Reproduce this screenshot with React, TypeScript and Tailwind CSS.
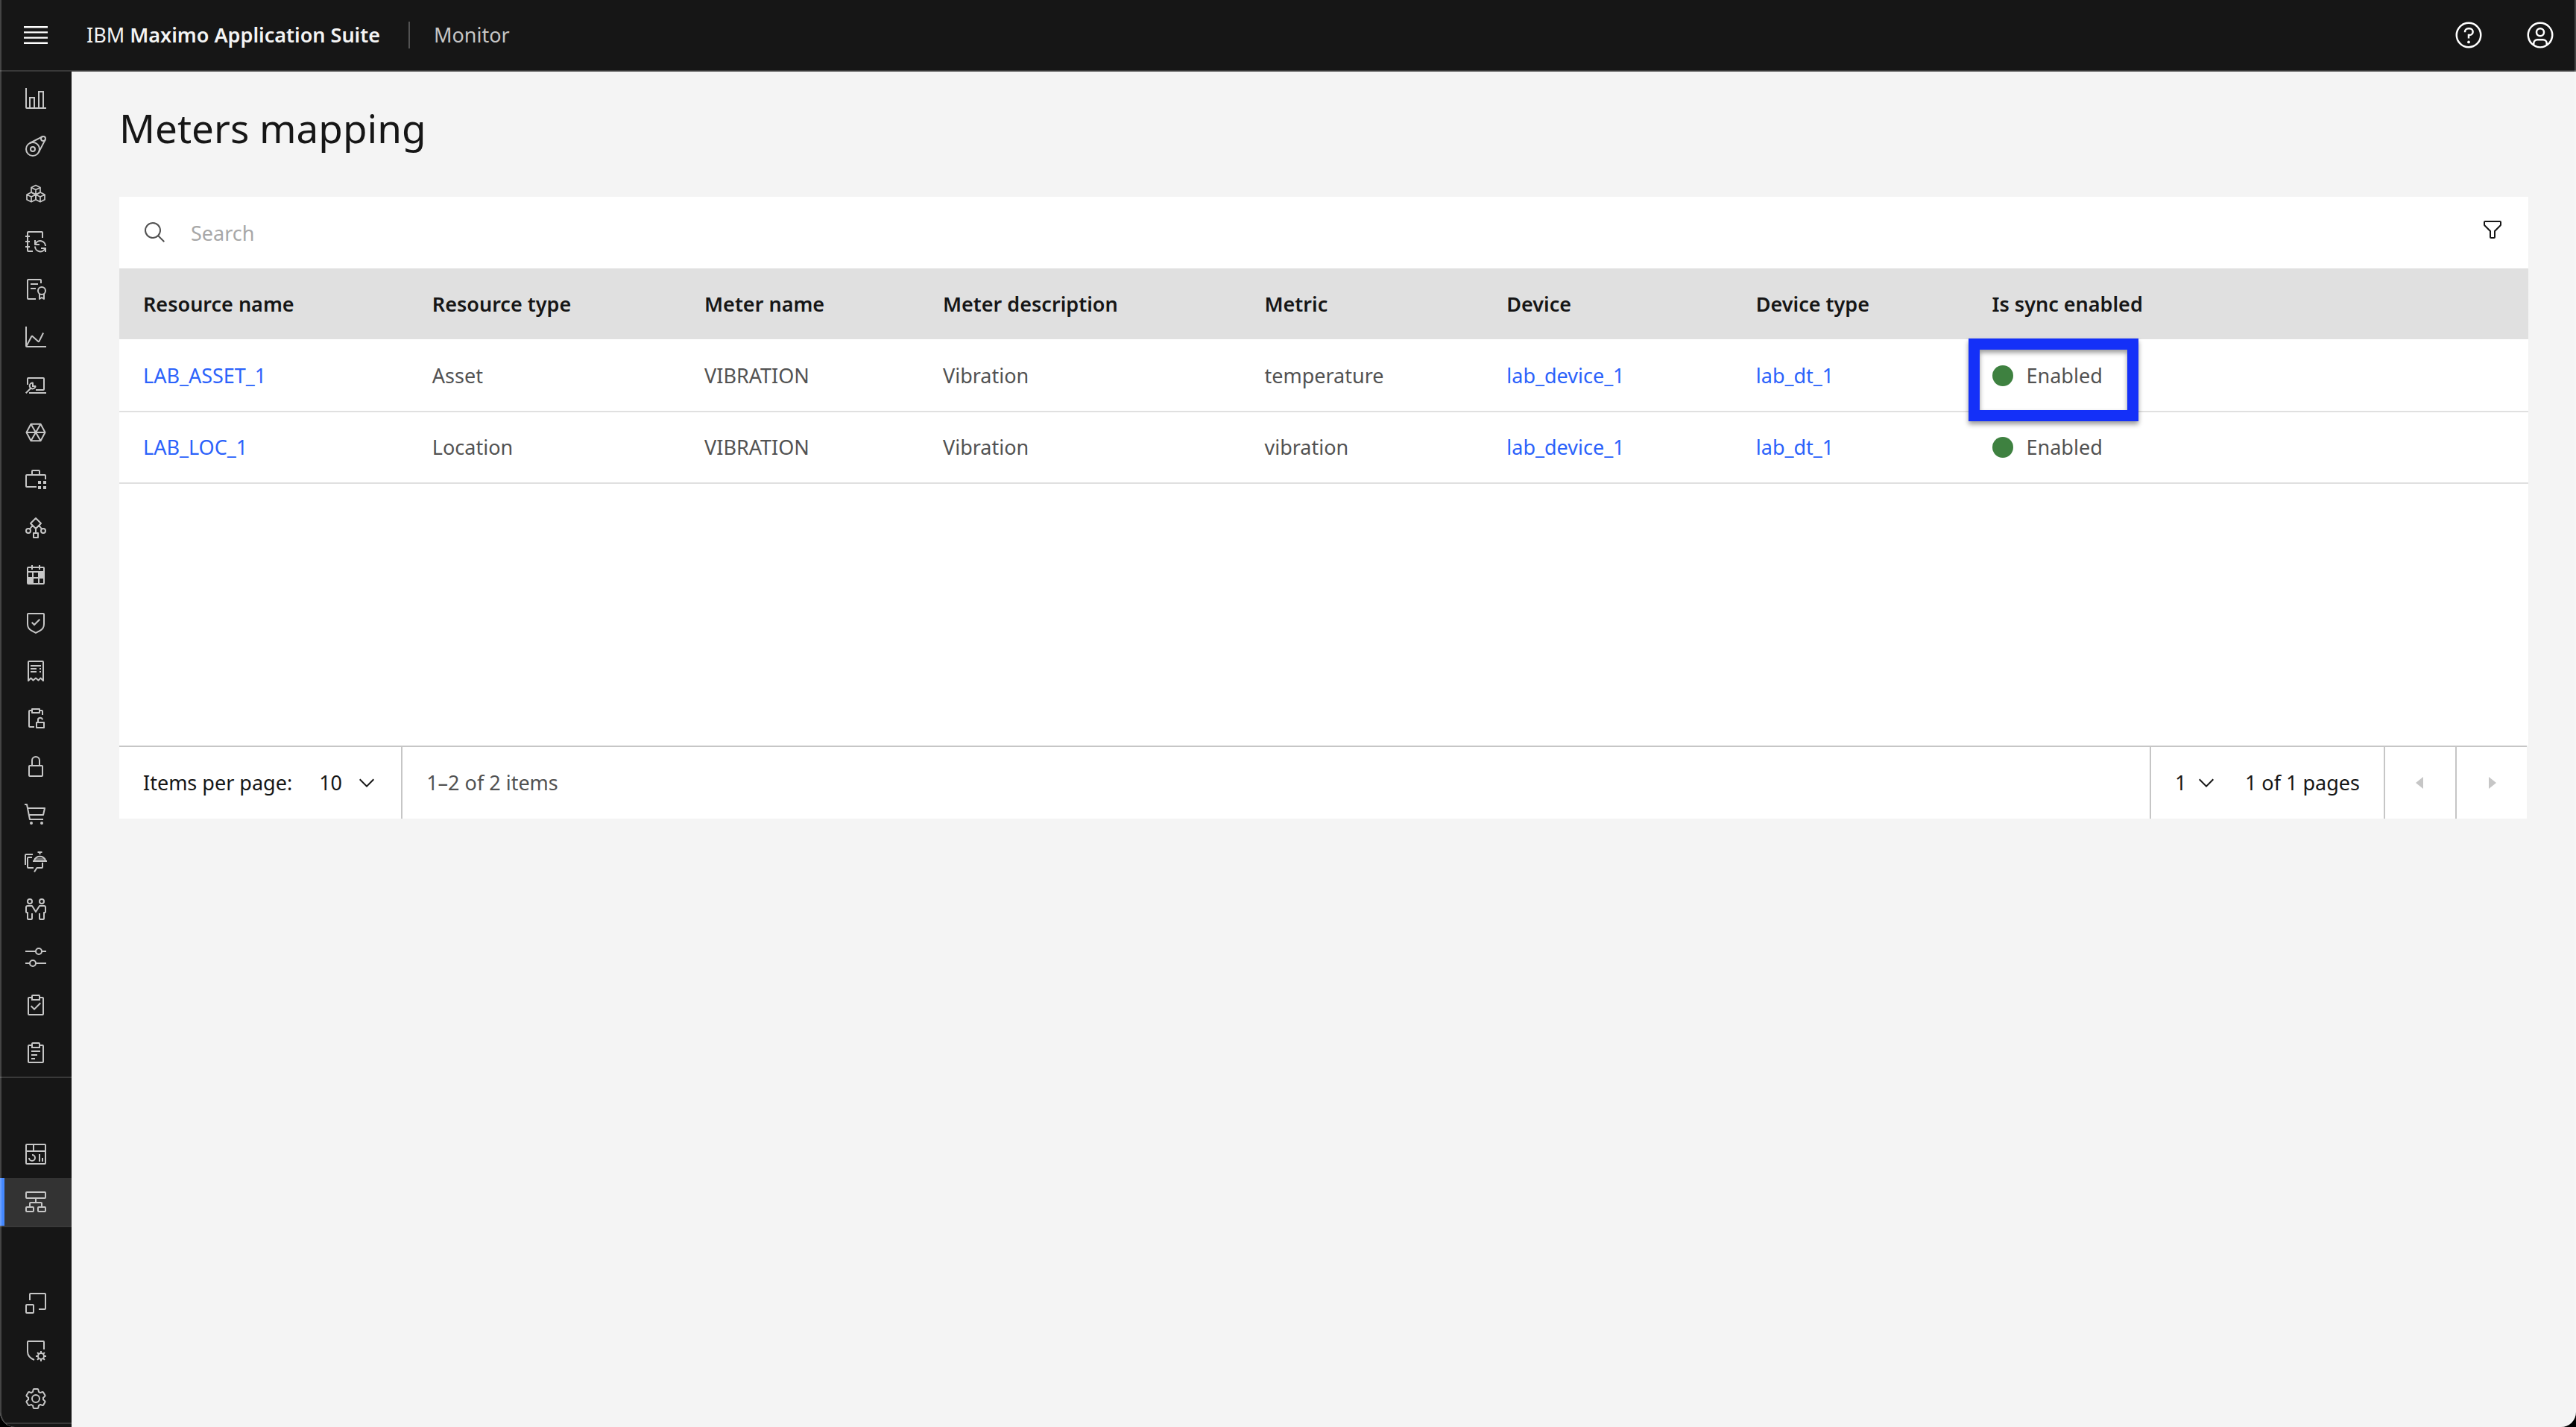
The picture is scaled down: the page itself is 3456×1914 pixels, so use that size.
import type { ReactNode } from 'react'

// 32x32 icon, filled and stroked shapes can be mixed
function Icon({ children, className = 'size-8' }: { children: ReactNode, className?: string }) {
    return <svg viewBox="0 0 32 32" fill="currentColor" className={`${className} shrink-0`} aria-hidden="true">{children}</svg>
}

function Lines({ children, width = 2 }: { children: ReactNode, width?: number }) {
    return <g fill="none" stroke="currentColor" strokeWidth={width} strokeLinejoin="round">{children}</g>
}

const clipboard = 'M25,5H22V4a2,2,0,0,0-2-2H12a2,2,0,0,0-2,2V5H7A2,2,0,0,0,5,7V28a2,2,0,0,0,2,2H25a2,2,0,0,0,2-2V7A2,2,0,0,0,25,5ZM12,4h8V8H12ZM25,28H7V7h3v3H22V7h3Z'

const mainNav = [
    { label: 'Dashboards', icon: <path d="M27,28V6H19V28H15V14H7V28H4V2H2V28a2,2,0,0,0,2,2H30V28ZM13,28H9V16h4Zm12,0H21V8h4Z" /> },
    { label: 'Assets', icon: <Lines><circle cx="12" cy="20" r="9" /><circle cx="12" cy="20" r="3" /><circle cx="26" cy="6" r="3" /><path d="M7.9 12 24.6 3.3M20 24.1 28.7 7.4" /></Lines> },
    { label: 'Inventory', icon: <Lines width={1.7}>
        <path d="M16 4.5l6 3v6.6l-6 3-6-3V7.5zM10 7.5l6 3 6-3M16 10.5v6.6" />
        <path d="M10 14.1l6 3v6.6l-6 3-6-3v-6.6zM4 17.1l6 3 6-3M10 20.1v6.6" />
        <path d="M22 14.1l6 3v6.6l-6 3-6-3v-6.6zM16 17.1l6 3 6-3M22 20.1v6.6" />
    </Lines> },
    { label: 'Planning', icon: <Lines><path d="M25 11V4a1 1 0 0 0-1-1H6a1 1 0 0 0-1 1v24a1 1 0 0 0 1 1h6M2 9h6M2 16h6M2 23h6" /><path d="M15 14v6h6M15.5 19.5A7 7 0 0 1 29 22M29 30v-5h-6M28.5 25A7 7 0 0 1 15 22.5" /></Lines> },
    { label: 'Contracts', icon: <Lines><path d="M23 8V4a1 1 0 0 0-1-1H6a1 1 0 0 0-1 1v24a1 1 0 0 0 1 1h10M9 9h10M9 15h7" /><circle cx="24" cy="18" r="5" /><path d="M21 22v7l3-2 3 2v-7" /></Lines> },
    { label: 'Financial', icon: <path d="M4.67,28l6.39-12,7.3,6.62a2,2,0,0,0,1.7.47,2,2,0,0,0,1.42-1.07L27,10.9,25.18,10,19.7,21,12.4,14.38a2,2,0,0,0-1.7-.47,2,2,0,0,0-1.44,1.09L4,25V2H2V28a2,2,0,0,0,2,2H30V28Z" /> },
    { label: 'IT assets', icon: <Lines><path d="M5 16V8a1 1 0 0 1 1-1h20a1 1 0 0 1 1 1v14a1 1 0 0 1-1 1H16M7 27h23" /><path d="M2.7 27.3 9 21M12.5 13.6a4 4 0 1 0 3.2 4.2M12 13.5v4.5h4" strokeLinejoin="miter" /></Lines> },
    { label: 'Integration', icon: <Lines><path d="M3.5 16 9.5 4.8h13L28.5 16l-6 11.2h-13zM3.5 16h25M9.5 4.8l13 22.4M22.5 4.8l-13 22.4" /></Lines> },
    { label: 'Preventive maintenance', icon: <><Lines><path d="M29 15v-5a1 1 0 0 0-1-1H4a1 1 0 0 0-1 1v14a1 1 0 0 0 1 1h13M11 9V4a1 1 0 0 1 1-1h8a1 1 0 0 1 1 1v5" /></Lines><path d="M19 17h4v4h-4zM26 17h4v4h-4zM19 24h4v4h-4zM26 24h4v4h-4z" /></> },
    { label: 'Workflows', icon: <Lines><path d="M16 3l7 7-7 7-7-7zM16 17v5M11.5 13 8 17.5M20.5 13l3.5 4.5M13 23h6v6h-6z" /><circle cx="6" cy="20" r="3" /><circle cx="26" cy="20" r="3" /></Lines> },
    { label: 'Releases', icon: <path fillRule="evenodd" d="M6 4h4V2h2v2h8V2h2v2h4a2 2 0 0 1 2 2v20a2 2 0 0 1-2 2H6a2 2 0 0 1-2-2V6a2 2 0 0 1 2-2zM6 6v4h20V6h-4v2h-2V6h-8v2h-2V6zM6 12h5v6H6zM13 12h6v6h-6zM13 20h6v6h-6zM21 20h5v6h-5z" /> },
    { label: 'Security', icon: <><path d="M14,16.59,11.41,14,10,15.41l4,4,8-8L20.59,10Z" /><path d="M16,30,9.824,26.707A10.98,10.98,0,0,1,4,17V4A2,2,0,0,1,6,2H26a2,2,0,0,1,2,2V17a10.98,10.98,0,0,1-5.824,9.707ZM6,4V17a8.985,8.985,0,0,0,4.766,7.942L16,27.733l5.234-2.791A8.986,8.986,0,0,0,26,17V4Z" /></> },
    { label: 'Purchasing', icon: <Lines><path d="M6 29V4a1 1 0 0 1 1-1h18a1 1 0 0 1 1 1v25l-3.5-3.5L19.5 28.5 16 25.5l-3.5 3L9.5 25.5zM9 9h14M9 13h8M21 13h2M9 17h8M21 17h2" /></Lines> },
    { label: 'Access', icon: <Lines><path d="M14 27H8a1 1 0 0 1-1-1V6a1 1 0 0 1 1-1h3M21 5h3a1 1 0 0 1 1 1v5M11 3h10v5H11z" /><path d="M17 21h10v7H17zM19 21v-3a3 3 0 0 1 6-.6" /></Lines> },
    { label: 'Administration', icon: <path d="M24,14H22V8A6,6,0,0,0,10,8v6H8a2,2,0,0,0-2,2V28a2,2,0,0,0,2,2H24a2,2,0,0,0,2-2V16A2,2,0,0,0,24,14ZM12,8a4,4,0,0,1,8,0v6H12ZM24,28H8V16H24Z" /> },
    { label: 'Self service', icon: <><circle cx="10" cy="28" r="2" /><circle cx="24" cy="28" r="2" /><path d="M28,7H5.82L5,2.8A1,1,0,0,0,4,2H1V4H3.18L7,23.2A1,1,0,0,0,8,24H26V22H8.82L8,18H26a1,1,0,0,0,1-.78l2-9A1,1,0,0,0,28,7ZM25.2,16H7.62l-1.4-7H26.75Z" /></> },
    { label: 'Service desk', icon: <><Lines><path d="M2 20V7a1 1 0 0 1 1-1h9M11 10H6a1 1 0 0 0-1 1v12a1 1 0 0 0 1 1h7M14 29.5l3.5-5.5H24a1 1 0 0 0 1-1v-6M12 15h19M14 14a8 8 0 0 1 15 0M18.5 3h6M21.5 3v3" /></Lines><path d="M14 11h15l1 4H13z" opacity=".5" /></> },
    { label: 'Resources', icon: <Lines><circle cx="8" cy="5" r="3" /><circle cx="24" cy="5" r="3" /><path d="M11 21v7a1 1 0 0 1-1 1H6a1 1 0 0 1-1-1v-8H4a1 1 0 0 1-1-1v-6a2 2 0 0 1 2-2h6l5 8 5-8h6a2 2 0 0 1 2 2v6a1 1 0 0 1-1 1h-1v8a1 1 0 0 1-1 1h-4a1 1 0 0 1-1-1v-7" /></Lines> },
    { label: 'System configuration', icon: <Lines><circle cx="20" cy="8" r="4" /><circle cx="12" cy="24" r="4" /><path d="M2 8h14M24 8h6M2 24h6M16 24h14" /></Lines> },
    { label: 'Task management', icon: <><path d="M14,20.18 10.41,16.59 9,18 14,23 23,14 21.59,12.58Z" /><path d={clipboard} /></> },
    { label: 'Work orders', icon: <><path d="M10 13h12v2H10zM10 18h8v2h-8zM10 23h5v2h-5z" /><path d={clipboard} /></> },
]

const monitorNav = [
    { label: 'Monitor dashboard', icon: <><path d="M24 21h2v5h-2zM20 16h2v10h-2zM11,26a5,5,0,0,1-5-5H8a3,3,0,1,0,3-3V16a5,5,0,0,1,0,10Z" /><path d="M28,2H4A2,2,0,0,0,2,4V28a2,2,0,0,0,2,2H28a2,2,0,0,0,2-2V4A2,2,0,0,0,28,2Zm0,9H14V4H28ZM12,4v7H4V4ZM4,28V13H28V28Z" /></> },
    { label: 'Setup', active: true, icon: <Lines><rect x="3" y="3" width="26" height="8" rx="1" /><rect x="3" y="23" width="10" height="6" rx="1" /><rect x="19" y="23" width="10" height="6" rx="1" /><path d="M16 11v6M8 23v-5a1 1 0 0 1 1-1h14a1 1 0 0 1 1 1v5" /></Lines> },
]

const bottomNav = [
    { label: 'Applications', icon: <Lines><rect x="3" y="18" width="10" height="11" rx="1" /><path d="M8 12V4a1 1 0 0 1 1-1h19a1 1 0 0 1 1 1v19a1 1 0 0 1-1 1h-8" /></Lines> },
    { label: 'Suite administration', icon: <Lines><path d="M27 14V4a1 1 0 0 0-1-1H6a1 1 0 0 0-1 1v13c0 5 4 9 9 11" /><circle cx="23" cy="23" r="4" /><path d="M23 16v3M23 27v3M16 23h3M27 23h3M18.1 18.1l2.1 2.1M25.8 25.8l2.1 2.1M27.9 18.1l-2.1 2.1M20.2 25.8l-2.1 2.1" /></Lines> },
    { label: 'Settings', icon: <><path d="M27,16.76c0-.25,0-.5,0-.76s0-.51,0-.77l1.92-1.68A2,2,0,0,0,29.3,11L26.94,7a2,2,0,0,0-1.73-1,2,2,0,0,0-.64.1l-2.43.82a11.35,11.35,0,0,0-1.31-.75l-.51-2.52a2,2,0,0,0-2-1.61H13.64a2,2,0,0,0-2,1.61l-.51,2.52a11.48,11.48,0,0,0-1.32.75L7.43,6.06A2,2,0,0,0,6.79,6,2,2,0,0,0,5.06,7L2.7,11a2,2,0,0,0,.41,2.51L5,15.24c0,.25,0,.5,0,.76s0,.51,0,.77L3.11,18.45A2,2,0,0,0,2.7,21L5.06,25a2,2,0,0,0,1.73,1,2,2,0,0,0,.64-.1l2.43-.82a11.35,11.35,0,0,0,1.31.75l.51,2.52a2,2,0,0,0,2,1.61h4.72a2,2,0,0,0,2-1.61l.51-2.52a11.48,11.48,0,0,0,1.32-.75l2.42.82a2,2,0,0,0,.64.1,2,2,0,0,0,1.73-1L29.3,21a2,2,0,0,0-.41-2.51ZM25.21,24l-3.43-1.16a8.86,8.86,0,0,1-2.71,1.57L18.36,28H13.64l-.71-3.55a9.36,9.36,0,0,1-2.7-1.57L6.79,24,4.43,20l2.72-2.4a8.9,8.9,0,0,1,0-3.13L4.43,12,6.79,8l3.43,1.16a8.86,8.86,0,0,1,2.71-1.57L13.64,4h4.72l.71,3.55a9.36,9.36,0,0,1,2.7,1.57L25.21,8,27.57,12l-2.72,2.4a8.9,8.9,0,0,1,0,3.13L27.57,20Z" /><Lines><circle cx="16" cy="16" r="5" /></Lines></> },
]

const columns = [
    { name: 'Resource name', width: 'w-[12%]' },
    { name: 'Resource type', width: 'w-[11.3%]' },
    { name: 'Meter name', width: 'w-[9.9%]' },
    { name: 'Meter description', width: 'w-[13.35%]' },
    { name: 'Metric', width: 'w-[10.05%]' },
    { name: 'Device', width: 'w-[10.35%]' },
    { name: 'Device type', width: 'w-[9.8%]' },
    { name: 'Is sync enabled', width: '' },
]

const rows = [
    { resource: 'LAB_ASSET_1', type: 'Asset', meter: 'VIBRATION', description: 'Vibration', metric: 'temperature', device: 'lab_device_1', deviceType: 'lab_dt_1', highlight: true },
    { resource: 'LAB_LOC_1', type: 'Location', meter: 'VIBRATION', description: 'Vibration', metric: 'vibration', device: 'lab_device_1', deviceType: 'lab_dt_1', highlight: false },
]

type NavItem = { label: string, icon: ReactNode, active?: boolean }

function NavList({ items }: { items: NavItem[] }) {
    return <ul>
        {items.map(item => <li key={item.label}>
            <a
                href="#"
                aria-label={item.label}
                className={item.active
                    ? 'flex h-16 items-center border-l-6 border-[#4589ff] bg-[#333333] pl-[26px]'
                    : 'flex h-16 items-center pl-8'}
            >
                <Icon>{item.icon}</Icon>
            </a>
        </li>)}
    </ul>
}

function Header() {
    return <header className="flex h-24 items-center border-b-2 border-[#393939] bg-[#161616] text-[#f4f4f4]">
        <button aria-label="Open menu" className="flex h-full w-24 items-center justify-center">
            <svg viewBox="0 0 20 20" fill="#fff" className="size-10" aria-hidden="true">
                <path d="M2 14.8h16V16H2zM2 11.2h16v1.2H2zM2 7.6h16v1.2H2zM2 4h16v1.2H2z" />
            </svg>
        </button>
        <a href="#" className="pl-5">IBM <span className="font-semibold">Maximo Application Suite</span></a>
        <span className="ml-[38px] h-9 w-0.5 bg-[#525252]" />
        <span className="ml-8 text-[#c6c6c6]">Monitor</span>
        <div className="ml-auto flex h-full text-white">
            <button aria-label="Help" className="flex w-24 items-center justify-center">
                <Icon className="size-10">
                    <path d="M16,2A14,14,0,1,0,30,16,14,14,0,0,0,16,2Zm0,26A12,12,0,1,1,28,16,12,12,0,0,1,16,28Z" />
                    <circle cx="16" cy="23.5" r="1.5" />
                    <path d="M17,8H15.5A4.49,4.49,0,0,0,11,12.5V13h2v-.5A2.5,2.5,0,0,1,15.5,10H17a2.5,2.5,0,0,1,0,5H15v4.5h2V17a4.5,4.5,0,0,0,0-9Z" />
                </Icon>
            </button>
            <button aria-label="User profile" className="flex w-24 items-center justify-center">
                <Icon className="size-10">
                    <path d="M16,8a5,5,0,1,0,5,5A5,5,0,0,0,16,8Zm0,8a3,3,0,1,1,3-3A3,3,0,0,1,16,16Z" />
                    <path d="M16,2A14,14,0,1,0,30,16,14.016,14.016,0,0,0,16,2ZM10,26.377V25a3,3,0,0,1,3-3h6a3,3,0,0,1,3,3v1.377a11.899,11.899,0,0,1-12,0Zm13.993-1.451A5,5,0,0,0,19,20H13a5,5,0,0,0-4.993,4.926,12,12,0,1,1,15.985,0Z" />
                </Icon>
            </button>
        </div>
    </header>
}

function Sidebar() {
    return <aside className="flex w-24 shrink-0 flex-col bg-[#161616] text-[#c6c6c6]">
        <nav className="flex flex-1 flex-col border-b-2 border-[#393939]">
            <div className="border-b-2 border-[#393939] pt-1">
                <NavList items={mainNav} />
            </div>
            <div className="border-b-2 border-[#393939] pt-[70px]">
                <NavList items={monitorNav} />
            </div>
            <div className="mt-auto">
                <NavList items={bottomNav} />
            </div>
        </nav>
        <div className="h-1" />
    </aside>
}

function Chevron() {
    return <Icon className="pointer-events-none absolute right-0 size-8">
        <path d="M16 22 6 12l1.4-1.4 8.6 8.6 8.6-8.6L26 12z" />
    </Icon>
}

function Pagination() {
    return <div className="mr-0.5 flex h-[98px] items-stretch border-t-2 border-[#c6c6c6] bg-white">
        <div className="flex items-center pl-8 pr-[30px]">
            <label htmlFor="page-size">Items per page:</label>
            <div className="relative ml-9 flex items-center">
                <select id="page-size" className="w-20 appearance-none bg-transparent" defaultValue="10">
                    <option>10</option>
                    <option>20</option>
                    <option>30</option>
                </select>
                <Chevron />
            </div>
        </div>
        <div className="flex items-center border-l-2 border-[#c6c6c6] pl-8 text-[#525252]">1–2 of 2 items</div>
        <div className="ml-auto flex items-center border-l-2 border-[#c6c6c6] pl-8 pr-8">
            <div className="relative flex items-center">
                <select aria-label="Page number" className="w-[58px] appearance-none bg-transparent" defaultValue="1">
                    <option>1</option>
                </select>
                <Chevron />
            </div>
            <span className="ml-9">1 of 1 pages</span>
        </div>
        <button disabled aria-label="Previous page" className="flex w-24 items-center justify-center border-l-2 border-[#c6c6c6] text-[#c6c6c6]">
            <Icon><path d="M20 24 10 16 20 8z" /></Icon>
        </button>
        <button disabled aria-label="Next page" className="flex w-24 items-center justify-center border-l-2 border-[#c6c6c6] text-[#c6c6c6]">
            <Icon><path d="M12 8l10 8-10 8z" /></Icon>
        </button>
    </div>
}

function MetersTable() {
    return <section className="mt-[60px]">
        <div className="min-h-[736px] bg-white">
            <div className="flex h-24 items-center">
                <label htmlFor="search" aria-label="Search" className="pl-8 text-[#525252]">
                    <Icon><path d="M29,27.586l-7.552-7.552a11.018,11.018,0,1,0-1.414,1.414L27.586,29ZM4,13a9,9,0,1,1,9,9A9.01,9.01,0,0,1,4,13Z" /></Icon>
                </label>
                <input id="search" type="text" placeholder="Search" className="h-full flex-1 pl-8 outline-none placeholder:text-[#a8a8a8]" />
                <button aria-label="Filters" className="flex h-[88px] w-24 items-center justify-center self-start">
                    <Icon><path d="M18,28H14a2,2,0,0,1-2-2V18.41L4.59,11A2,2,0,0,1,4,9.59V6A2,2,0,0,1,6,4H26a2,2,0,0,1,2,2V9.59A2,2,0,0,1,27.41,11L20,18.41V26A2,2,0,0,1,18,28ZM6,6V9.59l8,8V26h4V17.59l8-8V6Z" /></Icon>
                </button>
            </div>
            <table className="w-full table-fixed text-left text-[#525252]">
                <thead>
                    <tr className="bg-[#e0e0e0] text-[#161616]">
                        {columns.map(col => <th key={col.name} scope="col" className={`${col.width} h-24 border-b-2 border-white pl-8 font-semibold`}>{col.name}</th>)}
                    </tr>
                </thead>
                <tbody>
                    {rows.map(row => <tr key={row.resource} className="h-24 border-b-2 border-[#e0e0e0] *:pl-8">
                        <td><a href="#" className="text-[#2b62fb]">{row.resource}</a></td>
                        <td>{row.type}</td>
                        <td>{row.meter}</td>
                        <td>{row.description}</td>
                        <td>{row.metric}</td>
                        <td><a href="#" className="text-[#2b62fb]">{row.device}</a></td>
                        <td><a href="#" className="text-[#2b62fb]">{row.deviceType}</a></td>
                        <td className="relative">
                            <div className="flex items-center gap-[18px]">
                                <span className="size-7 rounded-full bg-[#3e8140]" />
                                Enabled
                            </div>
                            {row.highlight && <div className="pointer-events-none absolute -top-[3px] left-0 z-10 h-[111px] w-[228px] border-[15px] border-[#1430f8] drop-shadow-[0_4px_3px_rgba(0,0,0,0.4)]" />}
                        </td>
                    </tr>)}
                </tbody>
            </table>
        </div>
        <Pagination />
    </section>
}

export default function App() {
    return <div className="bg-black">
        <div className="relative flex min-h-screen flex-col overflow-hidden rounded-b-[20px] bg-[#f4f4f4] font-['Noto_Sans',sans-serif] text-[27px] leading-9 text-[#161616]">
            <Header />
            <div className="flex flex-1">
                <Sidebar />
                <main className="flex-1 px-16 pt-11">
                    <h1 className="text-[53px] leading-[64px]">Meters mapping</h1>
                    <MetersTable />
                </main>
            </div>
            {/* window edge */}
            <div className="pointer-events-none absolute inset-0 rounded-b-[20px] border-x-2 border-white/20" />
        </div>
    </div>
}
